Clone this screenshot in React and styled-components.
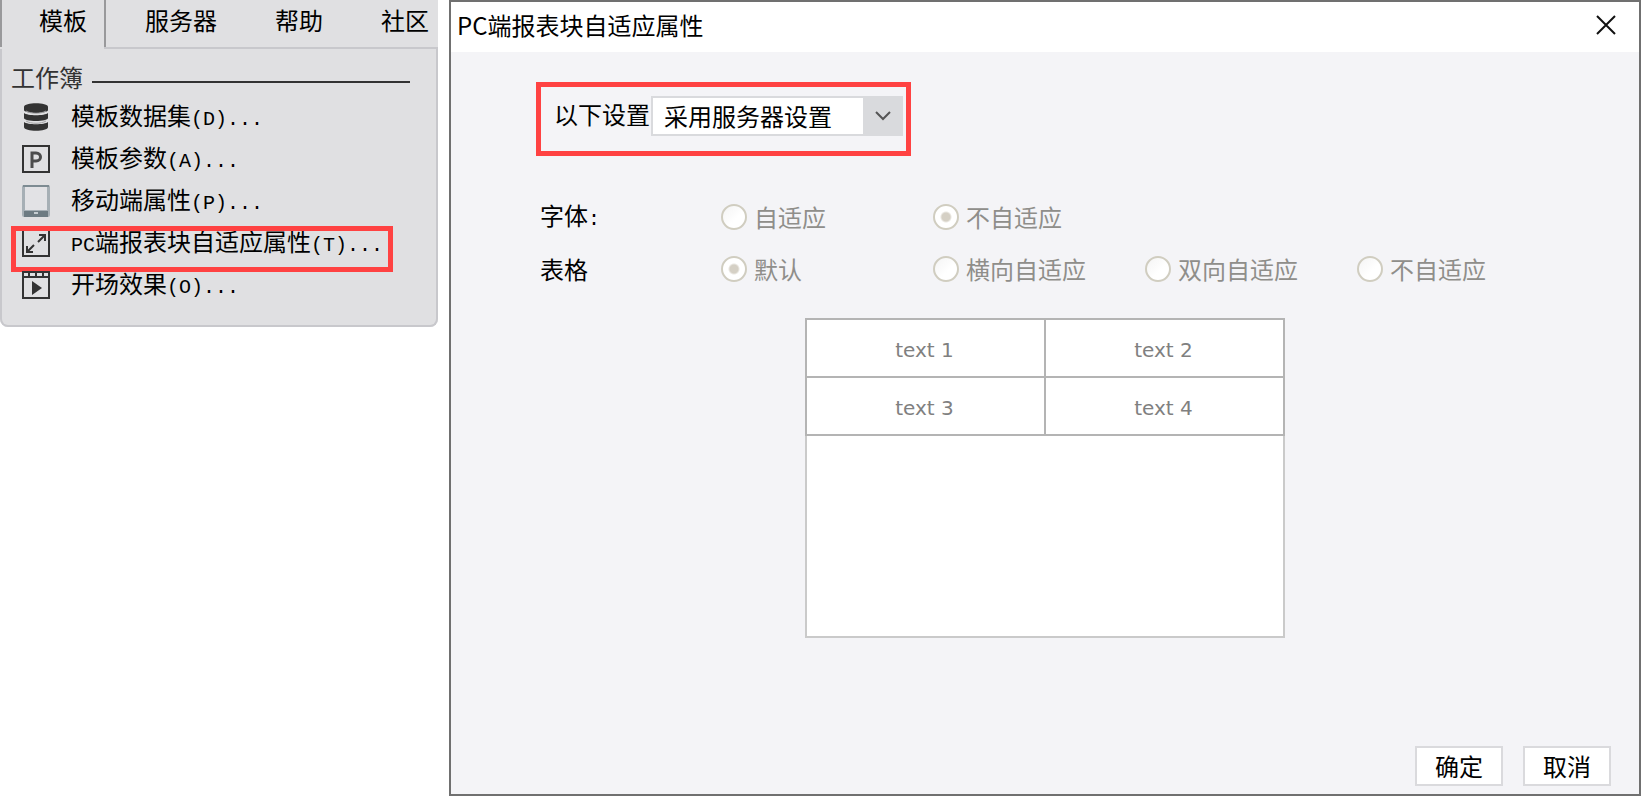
import React from 'react'
import styled, { createGlobalStyle } from 'styled-components'

const GlobalStyle = createGlobalStyle`
  * {
    box-sizing: border-box;
  }
  body {
    margin: 0;
    background: #ffffff;
    color: #000000;
    font-family: "Noto Sans CJK SC", sans-serif;
    font-size: 24px;
    line-height: 24px;
  }
  button, select {
    font: inherit;
    color: inherit;
  }
`
const Page = styled.div`
  display: flex;
  align-items: flex-start;
  gap: 11px;
  min-height: 100vh;
`
const Sidebar = styled.aside`
  flex: none;
  width: 438px;
  background: #e0e0e2;
  border-radius: 0 0 8px 8px;
`
const TabBar = styled.nav`
  display: flex;
  height: 49px;
`
const Tab = styled.button`
  flex: none;
  height: 40px;
  padding: 0;
  border: none;
  background: none;
  white-space: nowrap;
`
const ActiveTab = styled.div`
  width: 106px;
  height: 47px;
  padding-left: 37px;
  border: solid #99999b;
  border-width: 0 2px;
`
const TabRest = styled.div`
  flex: 1;
  display: flex;
  align-items: flex-start;
  gap: 58px;
  margin-left: -2px;
  padding-left: 41px;
  border-bottom: 2px solid #c8c8cc;
`
const MenuPanel = styled.div`
  padding: 16px 26px 19px 9px;
  border: solid #c8c8cc;
  border-width: 0 2px 2px;
  border-radius: 0 0 8px 8px;
`
const GroupTitle = styled.h2`
  display: flex;
  align-items: center;
  gap: 9px;
  margin: 0 0 7px;
  font-size: 24px;
  font-weight: 400;
  color: #333333;
`
const GroupLine = styled.span`
  flex: 1;
  height: 2px;
  margin-top: 10px;
  background: #333333;
`
const MenuList = styled.ul`
  margin: 0;
  padding: 0 0 0 11px;
  list-style: none;
`
const MenuItem = styled.li`
  position: relative;
`
const MenuButton = styled.button`
  display: flex;
  align-items: center;
  gap: 21px;
  height: 42px;
  padding: 0;
  border: none;
  background: none;
  white-space: nowrap;
`
const Latin = styled.span`
  font-family: "Liberation Mono", monospace;
  font-size: 20px;
`
const Highlight = styled.span`
  position: absolute;
  top: 4px;
  left: -11px;
  width: 382px;
  height: 46px;
  border: 5px solid #ff4242;
  pointer-events: none;
`
const Icon = styled.svg`
  display: block;
  flex: none;
  width: 28px;
  height: 32px;
`
const Dialog = styled.section`
  flex: 1;
  display: flex;
  flex-direction: column;
  min-height: 100vh;
  border: 2px solid #707070;
  background: #f4f4f7;
`
const TitleBar = styled.header`
  display: flex;
  align-items: center;
  justify-content: space-between;
  height: 50px;
  padding: 0 23px 4px 6px;
  background: #ffffff;
`
const Title = styled.h1`
  margin: 0;
  font-size: 24px;
  font-weight: 400;
`
const CloseButton = styled.button`
  padding: 0;
  border: none;
  background: none;
`
const CloseIcon = styled.svg`
  display: block;
  width: 20px;
  height: 20px;
`
const DialogBody = styled.div`
  flex: 1;
  padding: 30px 28px 0 85px;
`
const ModeBox = styled.div`
  display: flex;
  align-items: flex-start;
  width: 375px;
  height: 74px;
  padding: 9px 3px 0 13px;
  border: 5px solid #ff4242;
`
const ModeLabel = styled.label`
  line-height: 36px;
  white-space: nowrap;
`
const SelectWrap = styled.div`
  position: relative;
  flex: 1;
  margin-left: 1px;
`
const Select = styled.select`
  appearance: none;
  display: block;
  width: 100%;
  height: 40px;
  padding: 0 40px 0 11px;
  border: 2px solid #d9dadd;
  border-radius: 0;
  background: #ffffff;
  line-height: 36px;
`
const SelectArrow = styled.span`
  position: absolute;
  top: 0;
  right: 0;
  display: grid;
  place-items: center;
  width: 40px;
  height: 40px;
  background: #d9dadd;
  pointer-events: none;
`
const ArrowIcon = styled.svg`
  width: 18px;
  height: 12px;
`
const Settings = styled.div`
  margin-top: 35px;
`
const SettingRow = styled.div`
  display: flex;
  align-items: center;
  height: 52px;
  padding-left: 4px;
`
const SettingName = styled.span`
  width: 181px;
`
const Option = styled.label`
  display: flex;
  align-items: center;
  gap: 7px;
  width: 212px;
  color: #8f8e8a;
  white-space: nowrap;
`
const Radio = styled.input`
  appearance: none;
  flex: none;
  width: 26px;
  height: 26px;
  margin: 0;
  border: 2px solid #d0cdc0;
  border-radius: 50%;
  background: linear-gradient(135deg, #f4f4f4, #ffffff 60%);
  &:checked {
    background: radial-gradient(circle, #d5d0c5 0 4px, #ffffff 6px);
  }
`
const Preview = styled.div`
  width: 480px;
  height: 320px;
  margin: 23px auto 0;
  border: 2px solid #cacaca;
  background: #ffffff;
`
// the preview sits in the middle of the whole dialog, not of the padded body
const PreviewArea = styled.div`
  margin-left: -57px;
`
const Table = styled.table`
  width: 480px;
  margin: -2px 0 0 -2px;
  border-collapse: collapse;
  table-layout: fixed;
  font-family: "DejaVu Sans", sans-serif;
  font-size: 20px;
  color: #808080;
`
const Cell = styled.td`
  height: 58px;
  padding: 4px 2px 0 0;
  border: 2px solid #b4b4b4;
  text-align: center;
`
const Footer = styled.footer`
  display: flex;
  justify-content: flex-end;
  gap: 20px;
  padding: 0 28px 8px;
`
const DialogButton = styled.button`
  width: 88px;
  height: 40px;
  padding: 0;
  border: 2px solid #dadadd;
  background: #ffffff;
`

const DataIcon = () => (
  <Icon viewBox='0 0 28 32' fill='#333333'>
    <path d='M2 6C2 1 26 1 26 6v3c0 4-24 4-24 0z'/>
    <path d='M2 12c3 3 21 3 24 0v5c0 4-24 4-24 0z'/>
    <path d='M2 21c3 3 21 3 24 0v5c0 5-24 5-24 0z'/>
    <path d='M4 10c5 3 15 3 20 0M4 20c5 3 15 3 20 0' fill='none' stroke='#a4a4a6'/>
  </Icon>
)

const ParamIcon = () => (
  <Icon viewBox='0 0 28 32' fill='none' stroke='#333333' strokeWidth='2'>
    <rect x='1' y='3' width='26' height='26'/>
    <path d='M10 25V10h4c6 0 6 8 0 8h-4' stroke='#4c4c4c' strokeWidth='3'/>
  </Icon>
)

const MobileIcon = () => (
  <Icon viewBox='0 0 28 32'>
    <rect x='0' y='0' width='28' height='32' rx='2' fill='#a6afb5'/>
    <path d='M1 1h26' stroke='#7d8b92' strokeWidth='2'/>
    <rect x='3' y='2' width='22' height='23' fill='#e2e2e5'/>
    <path d='M2 26h24v6H2z' fill='#6d7b82'/>
    <rect x='12' y='27' width='4' height='2' fill='#c5cdd1'/>
  </Icon>
)

const FitIcon = () => (
  <Icon viewBox='0 0 28 32' fill='none' stroke='#333333' strokeWidth='2'>
    <rect x='1' y='3' width='26' height='26'/>
    <path d='M17 8h6v6M23 8l-7 7M5 19v6h6M5 25l7-7'/>
  </Icon>
)

const PlayIcon = () => (
  <Icon viewBox='0 0 28 32' fill='none' stroke='#333333' strokeWidth='2'>
    <rect x='1' y='3' width='26' height='26'/>
    <path d='M1 8h26M7 3v5M14 3v5M21 3v5'/>
    <path d='M10 12l10 7-10 7z' fill='#333333' stroke='none'/>
  </Icon>
)

const menuData = [
  { id: 'data', name: '模板数据集', shortcut: '(D)...', icon: DataIcon },
  { id: 'param', name: '模板参数', shortcut: '(A)...', icon: ParamIcon },
  { id: 'mobile', name: '移动端属性', shortcut: '(P)...', icon: MobileIcon },
  { id: 'fit', prefix: 'PC', name: '端报表块自适应属性', shortcut: '(T)...', icon: FitIcon, marked: true },
  { id: 'opening', name: '开场效果', shortcut: '(O)...', icon: PlayIcon }
]

const settingData = [
  { id: 'font', name: '字体', colon: true, options: ['自适应', '不自适应'], value: '不自适应' },
  { id: 'table', name: '表格', options: ['默认', '横向自适应', '双向自适应', '不自适应'], value: '默认' }
]

const tableData = [['text 1', 'text 2'], ['text 3', 'text 4']]

const App = () => {
  const [mode, setMode] = React.useState('server')

  return (
    <Page>
      <GlobalStyle/>
      <Sidebar>
        <TabBar>
          <ActiveTab>
            <Tab>模板</Tab>
          </ActiveTab>
          <TabRest>
            <Tab>服务器</Tab>
            <Tab>帮助</Tab>
            <Tab>社区</Tab>
          </TabRest>
        </TabBar>
        <MenuPanel>
          <GroupTitle>工作簿<GroupLine/></GroupTitle>
          <MenuList>
            {
              menuData.map(m => {
                const { id, prefix, name, shortcut, icon: ItemIcon, marked } = m
                return (
                  <MenuItem key={id}>
                    <MenuButton>
                      <ItemIcon/>
                      <span>{prefix && <Latin>{prefix}</Latin>}{name}<Latin>{shortcut}</Latin></span>
                    </MenuButton>
                    {marked && <Highlight/>}
                  </MenuItem>
                )
              })
            }
          </MenuList>
        </MenuPanel>
      </Sidebar>
      <Dialog role='dialog' aria-labelledby='dialog-title'>
        <TitleBar>
          <Title id='dialog-title'>PC端报表块自适应属性</Title>
          <CloseButton aria-label='关闭'>
            <CloseIcon viewBox='0 0 20 20' stroke='#111111' strokeWidth='2'>
              <path d='M1 1l18 18M19 1L1 19'/>
            </CloseIcon>
          </CloseButton>
        </TitleBar>
        <DialogBody>
          <ModeBox>
            <ModeLabel htmlFor='mode'>以下设置</ModeLabel>
            <SelectWrap>
              <Select id='mode' value={mode} onChange={e => setMode(e.target.value)}>
                <option value='server'>采用服务器设置</option>
              </Select>
              <SelectArrow>
                <ArrowIcon viewBox='0 0 18 12' fill='none' stroke='#555555' strokeWidth='2'>
                  <path d='M2 2l7 7 7-7'/>
                </ArrowIcon>
              </SelectArrow>
            </SelectWrap>
          </ModeBox>
          <Settings>
            {
              settingData.map(s => (
                <SettingRow key={s.id} role='radiogroup' aria-labelledby={`${s.id}-name`}>
                  <SettingName id={`${s.id}-name`}>{s.name}{s.colon && <Latin>:</Latin>}</SettingName>
                  {
                    s.options.map(o => (
                      <Option key={o}>
                        <Radio type='radio' name={s.id} defaultChecked={o === s.value} disabled/>
                        {o}
                      </Option>
                    ))
                  }
                </SettingRow>
              ))
            }
          </Settings>
          <PreviewArea>
            <Preview>
              <Table>
                <tbody>
                  {
                    tableData.map(row => (
                      <tr key={row[0]}>
                        {row.map(text => <Cell key={text}>{text}</Cell>)}
                      </tr>
                    ))
                  }
                </tbody>
              </Table>
            </Preview>
          </PreviewArea>
        </DialogBody>
        <Footer>
          <DialogButton>确定</DialogButton>
          <DialogButton>取消</DialogButton>
        </Footer>
      </Dialog>
    </Page>
  )
}

export default App
